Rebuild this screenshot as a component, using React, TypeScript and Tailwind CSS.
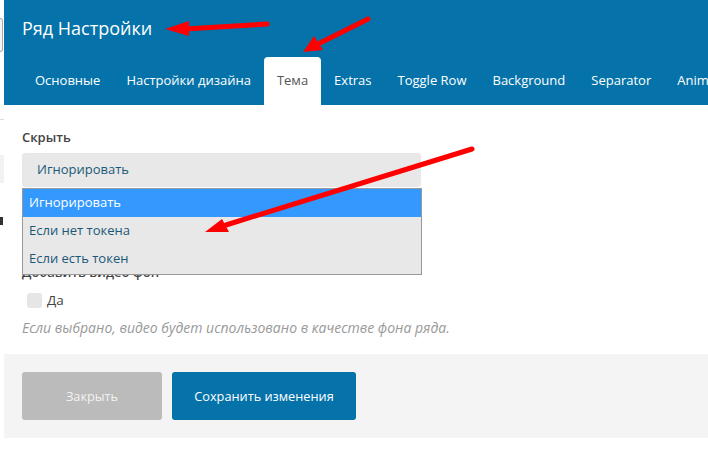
import React from "react";

const tabs = ["Основные", "Настройки дизайна", "Тема", "Extras", "Toggle Row", "Background", "Separator", "Animation"];

export default function App() {
  return (
    <div className="relative w-[708px] h-[453px] overflow-hidden bg-white flex" style={{ fontFamily: '"Open Sans", "Noto Sans", sans-serif' }}>
      {/* left underlying page strip */}
      <div className="w-[4px] shrink-0 flex flex-col bg-white">
        <div className="mt-[18px] h-[34px] w-[3px] border border-l-0 border-[#aaa] rounded-r-[3px] bg-[#f4f4f4]" />
        <div className="mt-[67px] h-[1px] w-[4px] bg-[#ddd]" />
        <div className="mt-[35px] h-[28px] w-[4px] bg-[#f2f2f2]" />
        <div className="mt-[34px] h-[8px] w-[3px] bg-[#333]" />
      </div>

      <div className="flex-1 flex flex-col">
        {/* header */}
        <div className="h-[105px] bg-[#0573aa] flex flex-col pl-[18px]">
          <div className="h-[57px] flex items-center text-[18px] text-white pb-[1px]">Ряд Настройки</div>
          <div className="h-[48px] flex items-stretch whitespace-nowrap">
            {tabs.map((t) => (
              <div
                key={t}
                className={
                  t === "Тема"
                    ? "px-[13px] flex items-center bg-white text-[#555] rounded-t-[4px] text-[13px]"
                    : "px-[13px] flex items-center text-white text-[13px]"
                }
              >
                {t}
              </div>
            ))}
          </div>
        </div>

        {/* body */}
        <div className="relative flex-1 flex flex-col">
          <div className="px-[18px] pt-[23px] flex flex-col">
            <div className="text-[13px] font-semibold text-[#444] leading-[18px]">Скрыть</div>
            <div className="mt-[7px] h-[34px] w-[399px] rounded-[3px] bg-[#e8e8e8] flex items-center pl-[15px] text-[13px] text-[#1b5878]">
              Игнорировать
            </div>
            <div className="mt-[76px] text-[13px] font-semibold text-[#444] leading-[18px]">Добавить видео фон</div>
            <div className="mt-[9px] flex items-center gap-[5px] pl-[5px]">
              <div className="w-[15px] h-[15px] rounded-[3px] bg-[#e6e6e6]" />
              <span className="text-[13.5px] text-[#444]">Да</span>
            </div>
            <div className="mt-[7px] text-[14px] italic text-[#999]">
              Если выбрано, видео будет использовано в качестве фона ряда.
            </div>
          </div>

          {/* dropdown list overlay */}
          <div className="absolute left-[18px] top-[83px] w-[400px] h-[87px] border border-[#999] bg-[#e8e8e8] flex flex-col text-[13px]">
            <div className="h-[28px] bg-[#3399ff] text-white flex items-center pl-[6px]">Игнорировать</div>
            <div className="h-[28px] text-[#1b5878] flex items-center pl-[6px]">Если нет токена</div>
            <div className="h-[28px] text-[#1b5878] flex items-center pl-[6px]">Если есть токен</div>
          </div>

          {/* footer */}
          <div className="mt-[16px] h-[84px] bg-[#f4f4f4] flex items-center gap-[10px] px-[18px]">
            <button className="w-[140px] h-[48px] rounded-[3px] bg-[#bbbbbb] text-[#f2f2f2] text-[12.75px]">Закрыть</button>
            <button className="w-[184px] h-[48px] rounded-[3px] bg-[#0573aa] text-white text-[12.75px]">Сохранить изменения</button>
          </div>
        </div>
      </div>

      {/* annotation arrows */}
      <svg className="absolute left-0 top-0 pointer-events-none" width="708" height="453" viewBox="0 0 708 453">
        <g stroke="#ff0000" strokeWidth="5" strokeLinecap="round" fill="#ff0000">
          <line x1="267" y1="24" x2="185" y2="29" />
          <line x1="368" y1="19" x2="318" y2="44" />
          <line x1="472" y1="149" x2="226" y2="225" />
        </g>
        <g fill="#ff0000">
          <polygon points="165,29 189,21 189,36" />
          <polygon points="303,52 314,36 323,50" />
          <polygon points="205,232 222,219 229,232" />
        </g>
      </svg>
    </div>
  );
}
